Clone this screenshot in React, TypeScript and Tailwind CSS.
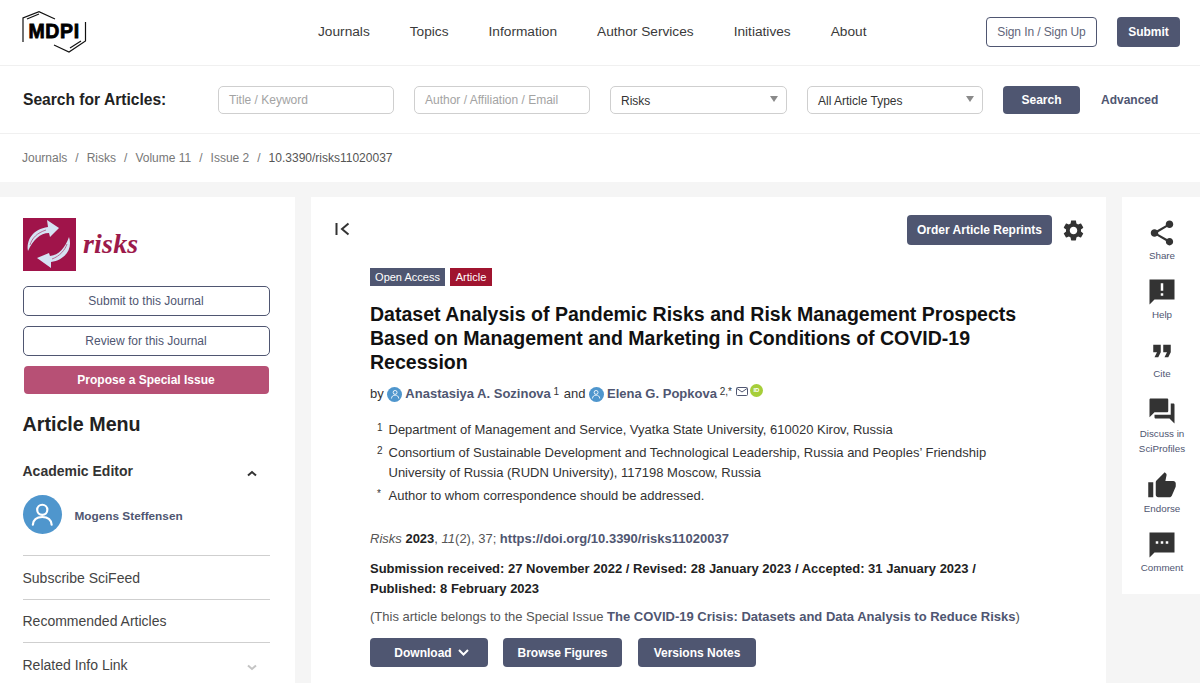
import React from "react";

const Mi = ({ d, className }: { d: string; className?: string }) => (
  <svg viewBox="0 0 24 24" className={className} fill="currentColor"><path fillRule="evenodd" d={d} /></svg>
);

const icons = {
  share: "M18 16.08c-.76 0-1.44.3-1.96.77L8.91 12.7c.05-.23.09-.46.09-.7s-.04-.47-.09-.7l7.05-4.11c.54.5 1.25.81 2.04.81 1.66 0 3-1.34 3-3s-1.34-3-3-3-3 1.34-3 3c0 .24.04.47.09.7L8.04 9.81C7.5 9.31 6.79 9 6 9c-1.66 0-3 1.34-3 3s1.34 3 3 3c.79 0 1.5-.31 2.04-.81l7.12 4.16c-.05.21-.08.43-.08.65 0 1.61 1.31 2.92 2.92 2.92 1.61 0 2.92-1.31 2.92-2.92s-1.31-2.92-2.92-2.92z",
  help: "M2 2H22V18H6L2 22V2zM13 11h-2V5h2v6zm0 4h-2v-2h2v2z",
  cite: "M6 17h3l2-4V7H5v6h3zm8 0h3l2-4V7h-6v6h3z",
  forum: "M21 6h-2v9H6v2c0 .55.45 1 1 1h11l4 4V7c0-.55-.45-1-1-1zm-4 6V3c0-.55-.45-1-1-1H3c-.55 0-1 .45-1 1v14l4-4h10c.55 0 1-.45 1-1z",
  thumb: "M1 21h4V9H1v12zm22-11c0-1.1-.9-2-2-2h-6.31l.95-4.57.03-.32c0-.41-.17-.79-.44-1.06L14.17 1 7.59 7.59C7.22 7.95 7 8.45 7 9v10c0 1.1.9 2 2 2h9c.83 0 1.54-.5 1.84-1.22l3.02-7.05c.09-.23.14-.47.14-.73v-2z",
  sms: "M2 2H22V18H6L2 22V2zM9 11H7V9h2v2zm4 0h-2V9h2v2zm4 0h-2V9h2v2z",
  gear: "M19.14 12.94c.04-.3.06-.61.06-.94 0-.32-.02-.64-.07-.94l2.03-1.58c.18-.14.23-.41.12-.61l-1.92-3.32c-.12-.22-.37-.29-.59-.22l-2.39.96c-.5-.38-1.03-.7-1.62-.94l-.36-2.54c-.04-.24-.24-.41-.48-.41h-3.84c-.24 0-.43.17-.47.41l-.36 2.54c-.59.24-1.13.57-1.62.94l-2.39-.96c-.22-.08-.47 0-.59.22L2.74 8.87c-.12.21-.08.47.12.61l2.03 1.58c-.05.3-.09.63-.09.94s.02.64.07.94l-2.03 1.58c-.18.14-.23.41-.12.61l1.92 3.32c.12.22.37.29.59.22l2.39-.96c.5.38 1.03.7 1.62.94l.36 2.54c.05.24.24.41.48.41h3.84c.24 0 .44-.17.47-.41l.36-2.54c.59-.24 1.13-.56 1.62-.94l2.39.96c.22.08.47 0 .59-.22l1.92-3.32c.12-.22.07-.47-.12-.61l-2.01-1.58zM12 15.6c-1.98 0-3.6-1.62-3.6-3.6s1.62-3.6 3.6-3.6 3.6 1.62 3.6 3.6-1.62 3.6-3.6 3.6z",
};

const Logo = () => (
  <svg width="66" height="43" viewBox="0 0 66 43" className="block" fill="none" stroke="#111">
    <path d="M1 31V7L17 0.700L33 8" strokeWidth="1.200" />
    <path d="M5 8L17 3" strokeWidth="1.200" />
    <path d="M63.500 11V30L47 41L32 34" strokeWidth="1.200" />
    <path d="M59 30L48 37" strokeWidth="1.200" />
    <text x="6.500" y="27" fontFamily="'Liberation Sans', sans-serif" fontWeight="700" fontSize="19.500" fill="#000" stroke="#000" strokeWidth="0.800" letterSpacing="0.600">MDPI</text>
  </svg>
);

const RisksMark = () => (
  <svg width="53" height="53" viewBox="0 0 53 53" className="block shrink-0">
    <rect width="53" height="53" fill="#a0144a" />
    <path d="M5 33C3 22 10 11 25 9L24 2L36 10L27 19L26 15C17 15 10 22 5 33Z" fill="#d5e3f3" />
    <path d="M46 19C50 31 42 42 28 44L28 50L14 40L26 35L27 38C36 37 42 30 46 19Z" fill="#d5e3f3" />
    <path d="M7 27C9 20 14 15 23 12M44 26C42 32 37 38 29 41" stroke="#b86a92" strokeWidth="1" fill="none" />
  </svg>
);

const Person = ({ size }: { size: number }) => (
  <span className="inline-flex items-center justify-center rounded-full bg-[#4f96cd] text-white shrink-0" style={{ width: size, height: size }}>
    <svg viewBox="0 0 24 24" width={size * 0.68} height={size * 0.68} fill="none" stroke="currentColor" strokeWidth="2">
      <circle cx="12" cy="8" r="4.600" />
      <path d="M3.500 21.500c.4-4.600 3.800-7 8.500-7s8.100 2.400 8.500 7" strokeLinecap="round" />
    </svg>
  </span>
);

const Select = ({ label, w, arrow }: { label: string; w: string; arrow?: boolean }) => (
  <div className={`${w} h-[28px] rounded-[5px] border border-[#cfcfcf] bg-white flex items-center justify-between pl-[10px] pr-[8px] text-[12px]`}>
    <span className={arrow ? "text-[#333] mt-[2px]" : "text-[#a3a3a3]"}>{label}</span>
    {arrow && <span className="w-0 h-0 border-l-[4px] border-r-[4px] border-t-[6px] border-l-transparent border-r-transparent border-t-[#8a8a8a] -mt-[1px]" />}
  </div>
);

const Side = ({ d, label, cls }: { d: string; label: React.ReactNode; cls: string }) => (
  <div className={`flex flex-col items-center text-center ${cls}`}>
    <Mi d={d} className="w-[30px] h-[30px] text-[#333]" />
    <div className="text-[9.800px] leading-[15px] text-[#4f5671]">{label}</div>
  </div>
);

const Btn = ({ children, w, h = "h-[29px]" }: { children: React.ReactNode; w: string; h?: string }) => (
  <div className={`${w} ${h} rounded-[4px] bg-[#4f5671] text-white text-[12px] font-bold flex items-center justify-center`}>{children}</div>
);

const Sup = ({ children }: { children: React.ReactNode }) => (
  <span className="text-[10px] relative -top-[3px]">{children}</span>
);

export default function App() {
  return (
    <div className="w-[1200px] h-[683px] overflow-hidden bg-[#f5f5f5] text-[#222] font-['Liberation_Sans',Arial,sans-serif]">
      <header className="bg-white h-[66px] border-b border-[#f0f0f0] flex items-center pl-[22px] pr-[20px]">
        <div className="-mt-[1px]"><Logo /></div>
        <nav className="ml-[230px] flex gap-[40px] text-[13.700px] text-[#3a3a3a]">
          <span>Journals</span><span>Topics</span><span>Information</span><span>Author Services</span><span>Initiatives</span><span>About</span>
        </nav>
        <div className="ml-auto flex gap-[20px] -mt-[2px]">
          <div className="w-[111px] h-[30px] rounded-[4px] border border-[#4f5671] text-[#5f6579] text-[12px] tracking-[-0.1px] flex items-center justify-center">Sign In / Sign Up</div>
          <div className="w-[63px] h-[30px] rounded-[4px] bg-[#4f5671] text-white text-[12px] font-bold flex items-center justify-center">Submit</div>
        </div>
      </header>

      <div className="bg-white h-[68px] border-b border-[#f0f0f0] flex items-center pl-[23px]">
        <div className="w-[195px] text-[15.600px] font-bold text-[#222]">Search for Articles:</div>
        <div className="flex gap-[20px] items-center">
          <Select label="Title / Keyword" w="w-[176px]" />
          <Select label="Author / Affiliation / Email" w="w-[176px]" />
          <Select label="Risks" w="w-[177px]" arrow />
          <Select label="All Article Types" w="w-[176px]" arrow />
          <Btn w="w-[77px]" h="h-[28px]">Search</Btn>
        </div>
        <span className="ml-[21px] text-[12px] font-bold text-[#4f5671]">Advanced</span>
      </div>

      <div className="bg-white h-[48px] flex items-center pl-[22px] text-[12px] text-[#777] gap-[8px] pb-[1px]">
        <span>Journals</span><span>/</span><span>Risks</span><span>/</span><span>Volume 11</span><span>/</span><span>Issue 2</span><span>/</span><span className="text-[#555]">10.3390/risks11020037</span>
      </div>

      <div className="flex mt-[15px] h-[600px] items-start">
        <aside className="w-[295px] h-full bg-white pl-[22.500px] pr-[25.500px] pt-[21px] shrink-0">
          <div className="flex items-center gap-[7px] pl-[0.500px]">
            <RisksMark />
            <span className="font-['Liberation_Serif',serif] italic font-bold text-[28px] text-[#9c1a4b] tracking-[0.2px] -mt-[1px]">risks</span>
          </div>
          <div className="mt-[15px] h-[30px] rounded-[5px] border border-[#4f5671] text-[12px] text-[#4f5671] flex items-center justify-center">Submit to this Journal</div>
          <div className="mt-[10px] h-[30px] rounded-[5px] border border-[#4f5671] text-[12px] text-[#4f5671] flex items-center justify-center">Review for this Journal</div>
          <div className="mt-[10px] mx-[1px] h-[28px] rounded-[4px] bg-[#b75075] text-[12px] font-bold text-white flex items-center justify-center">Propose a Special Issue</div>
          <h2 className="mt-[18px] text-[19.700px] leading-[24px] font-bold text-[#222]">Article Menu</h2>
          <div className="mt-[25px] flex items-center justify-between pr-[13px]">
            <span className="text-[14px] font-bold text-[#333]">Academic Editor</span>
            <svg width="10" height="7" viewBox="0 0 10 7" fill="none" stroke="#333" strokeWidth="2" className="mt-[3px]"><path d="M1 5.500L5 2L9 5.500" /></svg>
          </div>
          <div className="mt-[13px] flex items-center gap-[13px]">
            <Person size={39} />
            <span className="text-[11.800px] font-bold text-[#4f5671] mt-[5px]">Mogens Steffensen</span>
          </div>
          <div className="mt-[21px] border-t border-[#cfcfcf] h-[44px] pt-[2px] flex items-center text-[14px] text-[#444]">Subscribe SciFeed</div>
          <div className="border-t border-[#cfcfcf] h-[43px] flex items-center text-[14px] text-[#444]">Recommended Articles</div>
          <div className="border-t border-[#cfcfcf] h-[44px] pt-[2px] flex items-center justify-between pr-[13px] text-[14px] text-[#444]">
            <span>Related Info Link</span>
            <svg width="10" height="7" viewBox="0 0 10 7" fill="none" stroke="#c4c4c4" strokeWidth="2" className="mt-[3px]"><path d="M1 1.500L5 5L9 1.500" /></svg>
          </div>
        </aside>

        <main className="ml-[16px] w-[795px] h-full bg-white shrink-0 pl-[24px] pr-[20px] pt-[18px]">
          <div className="flex items-start justify-between">
            <svg width="16" height="14" viewBox="0 0 16 14" fill="none" stroke="#333" strokeWidth="2" className="mt-[7px]"><path d="M1.500 1V13" /><path d="M13.500 1.500L7 7L13.500 12.500" /></svg>
            <div className="flex items-center gap-[9px]">
              <Btn w="w-[145px]" h="h-[30px]">Order Article Reprints</Btn>
              <Mi d={icons.gear} className="w-[25px] h-[25px] text-[#333]" />
            </div>
          </div>
          <div className="ml-[35px] w-[660px]">
            <div className="mt-[23px] flex gap-[5px] text-[11px] text-white">
              <span className="h-[18px] w-[75px] bg-[#4f5671] flex items-center justify-center">Open Access</span>
              <span className="h-[18px] w-[42px] bg-[#a0142f] flex items-center justify-center">Article</span>
            </div>
            <h1 className="mt-[16px] text-[19.550px] leading-[24px] font-bold text-[#111]">Dataset Analysis of Pandemic Risks and Risk Management Prospects Based on Management and Marketing in Conditions of COVID-19 Recession</h1>
            <div className="mt-[9px] h-[22px] flex items-center text-[13px] font-normal text-[#333] whitespace-pre">
              <span>by </span><Person size={15} /><span className="font-bold text-[#4f5671] ml-[3px]">Anastasiya A. Sozinova</span><Sup> 1</Sup><span className="ml-[1px]"> and </span><Person size={15} /><span className="font-bold text-[#4f5671] ml-[3px]">Elena G. Popkova</span><Sup> 2,*</Sup>
              <svg width="12" height="9" viewBox="0 0 12 9" fill="none" stroke="#4f5671" className="ml-[4px] -mt-[5px]"><rect x="0.500" y="0.500" width="11" height="8" rx="1" /><path d="M1 1.500L6 5L11 1.500" /></svg>
              <span className="ml-[2px] -mt-[7px] w-[13px] h-[13px] rounded-full bg-[#a6ce39] text-white text-[6px] leading-[13px] font-bold text-center">ID</span>
            </div>
            <div className="mt-[15px] text-[13px] text-[#333] grid grid-cols-[18.500px_1fr] leading-[20px]">
              <span className="text-[10px] leading-[16px] pl-[7px]">1</span>
              <span className="h-[23px]">Department of Management and Service, Vyatka State University, 610020 Kirov, Russia</span>
              <span className="text-[10px] leading-[16px] pl-[7px]">2</span>
              <span className="h-[43px]">Consortium of Sustainable Development and Technological Leadership, Russia and Peoples’ Friendship University of Russia (RUDN University), 117198 Moscow, Russia</span>
              <span className="text-[10px] leading-[16px] pl-[7px]">*</span>
              <span>Author to whom correspondence should be addressed.</span>
            </div>
            <div className="mt-[23px] text-[13px] leading-[20px] text-[#555]"><i>Risks</i> <b className="text-[#222]">2023</b>, <i>11</i>(2), 37; <b className="text-[#4f5671]">https://doi.org/10.3390/risks11020037</b></div>
            <div className="mt-[10px] text-[13px] leading-[20px] font-bold text-[#222]">Submission received: 27 November 2022 / Revised: 28 January 2023 / Accepted: 31 January 2023 / Published: 8 February 2023</div>
            <div className="mt-[8px] text-[13px] leading-[20px] text-[#555]">(This article belongs to the Special Issue <b className="text-[#4f5671]">The COVID-19 Crisis: Datasets and Data Analysis to Reduce Risks</b>)</div>
            <div className="mt-[11px] flex">
              <Btn w="w-[118px]"><span className="ml-[5px] mr-[6px]">Download</span><svg width="11" height="7" viewBox="0 0 11 7" fill="none" stroke="#fff" strokeWidth="2"><path d="M1 1L5.500 5.500L10 1" /></svg></Btn>
              <div className="ml-[15px]"><Btn w="w-[119px]">Browse Figures</Btn></div>
              <div className="ml-[16px]"><Btn w="w-[118px]">Versions Notes</Btn></div>
            </div>
          </div>
        </main>

        <aside className="ml-[16px] w-[78px] h-[397px] bg-white shrink-0 pt-[21px] pl-[2px]">
          <Side d={icons.share} label="Share" cls="" />
          <Side d={icons.help} label="Help" cls="mt-[14px]" />
          <Side d={icons.cite} label="Cite" cls="mt-[14px]" />
          <Side d={icons.forum} label={<>Discuss in<br />SciProfiles</>} cls="mt-[15px]" />
          <Side d={icons.thumb} label="Endorse" cls="mt-[15px]" />
          <Side d={icons.sms} label="Comment" cls="mt-[14px]" />
        </aside>
      </div>
    </div>
  );
}
